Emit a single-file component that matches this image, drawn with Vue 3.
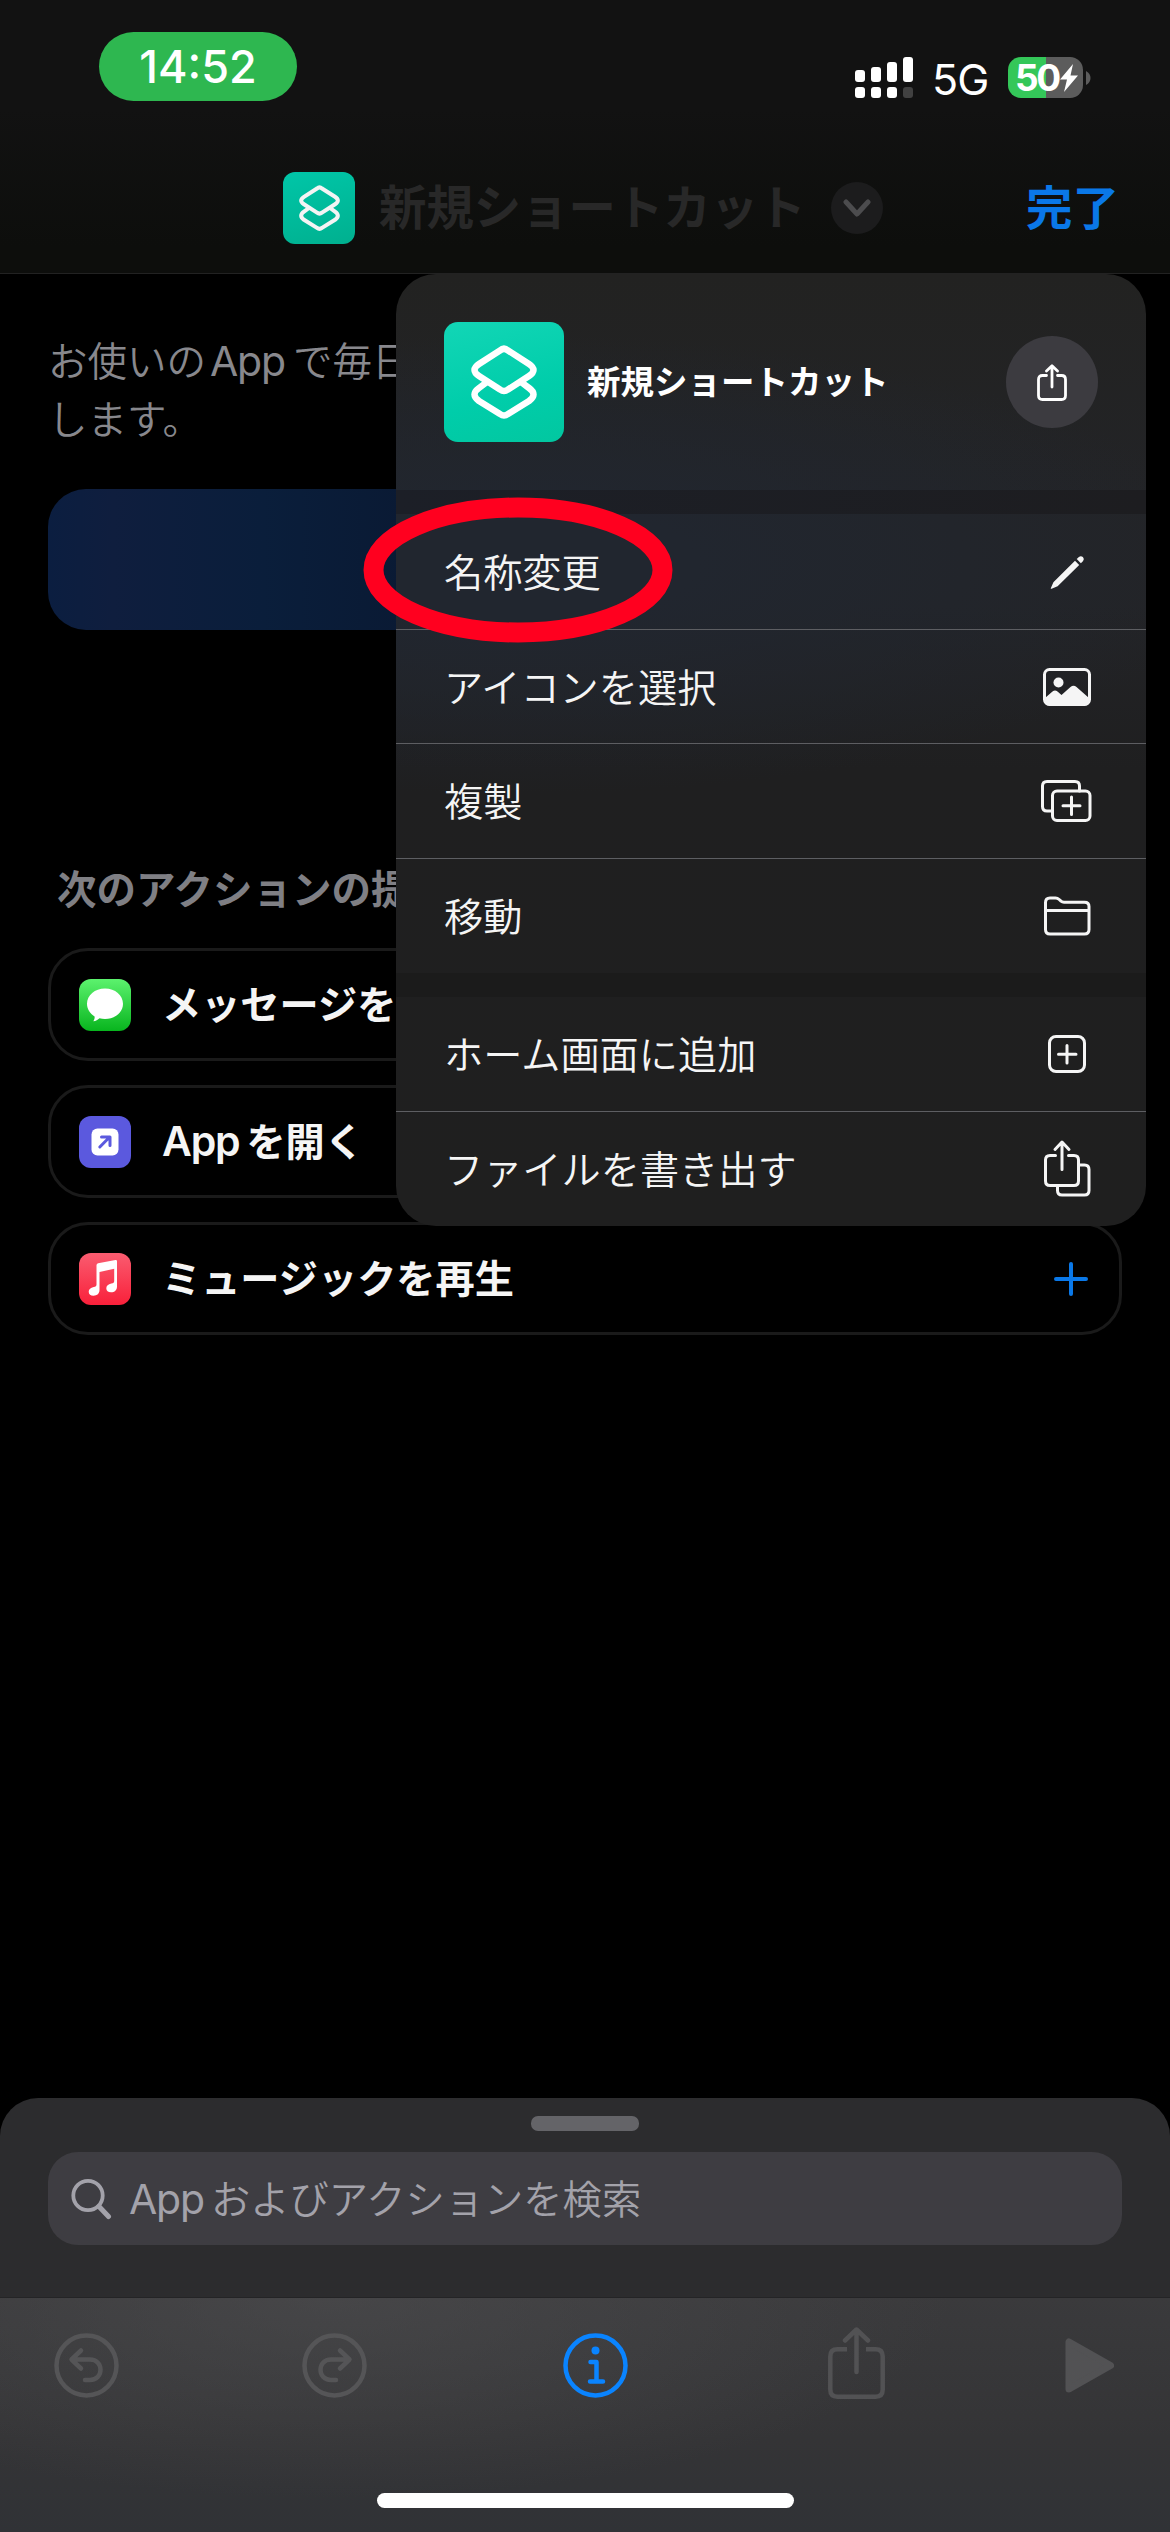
<script setup>
const fileActions = [
  { label: '名称変更', icon: 'pencil' },
  { label: 'アイコンを選択', icon: 'photo' },
  { label: '複製', icon: 'duplicate' },
  { label: '移動', icon: 'folder' },
]
const shareActions = [
  { label: 'ホーム画面に追加', icon: 'plus' },
  { label: 'ファイルを書き出す', icon: 'export' },
]
const groups = [fileActions, shareActions]
const suggestions = [
  { latin: '', label: 'メッセージを送信', icon: 'message' },
  { latin: 'App', label: 'を開く', icon: 'open' },
  { latin: '', label: 'ミュージックを再生', icon: 'music' },
]
</script>

<template>
  <div class="screen">
    <header class="header">
      <div class="status">
        <div class="clock">14:52</div>
        <div class="indicators">
          <svg class="signal" width="58" height="41" viewBox="0 0 58 41">
            <g fill="#fff">
              <rect x="0" y="13" width="10" height="12" rx="3" />
              <rect x="16" y="10" width="10" height="15" rx="3" />
              <rect x="32" y="5" width="10" height="20" rx="3" />
              <rect x="48" y="0" width="10" height="25" rx="3" />
              <rect x="0" y="30" width="10" height="11" rx="3" />
              <rect x="16" y="30" width="10" height="11" rx="3" />
              <rect x="32" y="30" width="10" height="11" rx="3" />
            </g>
            <rect x="48" y="30" width="10" height="11" rx="3" fill="#414141" />
          </svg>
          <span class="network">5G</span>
          <div class="battery">
            <span class="level">50</span>
            <svg width="19" height="28" viewBox="0 0 19 28"><path d="M14 0 1 15.500h7L5 28 19 11.500h-7.500z" fill="#fff" /></svg>
          </div>
          <svg class="battery-tip" width="5" height="14" viewBox="0 0 5 14"><path d="M0 0q4.500 2.500 4.500 7T0 14z" fill="#5c5c5c" /></svg>
        </div>
      </div>
      <div class="nav">
        <div class="app-tile small">
          <svg width="41" height="46" viewBox="0 0 66 74"><g fill="none" stroke="#f4f4f4" stroke-width="6.500" stroke-linejoin="round"><path d="M29 5.500Q33 2 37 5.500L58 19Q67 25 58 31L37 44.500Q33 47.500 29 44.500L8 31Q-1 25 8 19Z" /><path d="M16 37 8 43Q-1 49.500 8 56L29 69Q33 72 37 69L58 56Q67 49.500 58 43L50 37" /></g></svg>
        </div>
        <span class="nav-title">新規ショートカット</span>
        <div class="chevron">
          <svg width="28" height="18" viewBox="0 0 28 18"><path d="M3 3 14 15 25 3" fill="none" stroke="#4c4c4e" stroke-width="5" stroke-linecap="round" stroke-linejoin="round" /></svg>
        </div>
        <span class="done">完了</span>
      </div>
    </header>

    <main class="content">
      <p class="intro">お使いの<span class="latin">App</span>で毎日<br />します。</p>
      <div class="banner"></div>
      <h2 class="section">次のアクションの提案</h2>
      <div class="suggestions">
        <div v-for="s in suggestions" :key="s.label" class="suggestion">
          <svg v-if="s.icon === 'message'" width="52" height="52" viewBox="0 0 52 52">
            <defs><linearGradient id="g-msg" x2="0" y2="1"><stop stop-color="#5cf26e" /><stop offset="1" stop-color="#08b51e" /></linearGradient></defs>
            <rect width="52" height="52" rx="12" fill="url(#g-msg)" />
            <path d="M26 9.500c10.200 0 18 6.800 18 15.300S36.200 40 26 40c-2 0-3.800-.2-5.500-.7-1.500 1.600-3.700 2.700-6.200 3 1.100-1.400 1.500-3 1.300-4.900C11 34.700 8 30 8 24.800 8 16.300 15.800 9.500 26 9.500z" fill="#fff" />
          </svg>
          <svg v-else-if="s.icon === 'open'" width="52" height="52" viewBox="0 0 52 52">
            <rect width="52" height="52" rx="12" fill="#5b59de" />
            <rect x="12.500" y="12.500" width="27" height="27" rx="6" fill="#fff" />
            <path d="M20.800 31 30.200 21.500M22.500 21H31V29.500" fill="none" stroke="#5b59de" stroke-width="3" stroke-linecap="round" stroke-linejoin="round" />
          </svg>
          <svg v-else width="52" height="52" viewBox="0 0 52 52">
            <defs><linearGradient id="g-mus" x2="0" y2="1"><stop stop-color="#fa5c70" /><stop offset="1" stop-color="#f9203a" /></linearGradient></defs>
            <rect width="52" height="52" rx="12" fill="url(#g-mus)" />
            <path d="M17.500 12.300q0-1.600 1.600-2L36.500 7q1.500-.2 1.500 1.300V33.500c0 3.500-2.300 5.800-6 5.800-2.900 0-4.700-1.600-4.700-4 0-2.700 1.900-4.300 5-4.900 2.100-.4 2.900-.9 2.900-2.500V15.800L20.500 19V37c0 3.500-2.300 5.700-6 5.700-2.900 0-4.800-1.600-4.800-4 0-2.600 1.900-4.200 5-4.800 2-.4 2.800-.9 2.800-2.500z" fill="#fff" />
          </svg>
          <span class="suggestion-label"><span v-if="s.latin" class="latin">{{ s.latin }}</span>{{ s.label }}</span>
          <svg class="add" width="34" height="34" viewBox="0 0 34 34"><path d="M17 2V32M2 17H32" stroke="#0a78e8" stroke-width="4" stroke-linecap="round" /></svg>
        </div>
      </div>
    </main>

    <section class="sheet">
      <div class="grabber"></div>
      <div class="search">
        <svg width="42" height="42" viewBox="0 0 42 42"><g fill="none" stroke="#a3a2aa" stroke-linecap="round"><circle cx="17" cy="17.500" r="14.700" stroke-width="3.800" /><path d="M28 28.500 37.500 38.500" stroke-width="5" /></g></svg>
        <span class="placeholder"><span class="latin">App</span>およびアクションを検索</span>
      </div>
    </section>

    <footer class="toolbar">
      <div class="tools">
        <svg width="65" height="65" viewBox="0 0 65 65"><g fill="none" stroke="#555557" stroke-width="4.500" stroke-linecap="round" stroke-linejoin="round"><circle cx="32.500" cy="32.500" r="30" /><path d="M27 17.500 17.500 26.500 27 35.500M18.500 26.500H36C50 26.500 50 47 36 47H31" /></g></svg>
        <svg class="tool-redo" width="65" height="65" viewBox="0 0 65 65"><g fill="none" stroke="#555557" stroke-width="4.500" stroke-linecap="round" stroke-linejoin="round"><circle cx="32.500" cy="32.500" r="30" /><path d="M38 17.500 47.500 26.500 38 35.500M46.500 26.500H29C15 26.500 15 47 29 47H34" /></g></svg>
        <svg class="tool-info" width="65" height="65" viewBox="0 0 65 65"><g fill="none" stroke="#0a84ff" stroke-width="4.500" stroke-linecap="round" stroke-linejoin="round"><circle cx="32.500" cy="32.500" r="30" /><path d="M27.500 29H33.500V48.500M27 48.500H40" /></g><circle cx="32.500" cy="17.500" r="4" fill="#0a84ff" /></svg>
        <svg class="tool-share" width="57" height="72" viewBox="0 0 57 72"><g fill="none" stroke="#525254" stroke-width="4.500" stroke-linecap="round" stroke-linejoin="round"><path d="M19 22.300H9.500Q2.300 22.300 2.300 29.500V62.500Q2.300 69.700 9.500 69.700H47.500Q54.700 69.700 54.700 62.500V29.500Q54.700 22.300 47.500 22.300H38" stroke-linecap="butt" /><path d="M28.500 3V45M17 13.500 28.500 2.500 40 13.500" /></g></svg>
        <svg class="tool-play" width="49" height="55" viewBox="0 0 49 55"><path d="M4 4V51L45.500 27.500z" fill="#525254" stroke="#525254" stroke-width="7" stroke-linejoin="round" /></svg>
      </div>
      <div class="home"></div>
    </footer>

    <div class="menu">
      <div class="menu-head">
        <div class="app-tile">
          <svg width="66" height="74" viewBox="0 0 66 74"><g fill="none" stroke="#fff" stroke-width="6.500" stroke-linejoin="round"><path d="M29 5.500Q33 2 37 5.500L58 19Q67 25 58 31L37 44.500Q33 47.500 29 44.500L8 31Q-1 25 8 19Z" /><path d="M16 37 8 43Q-1 49.500 8 56L29 69Q33 72 37 69L58 56Q67 49.500 58 43L50 37" /></g></svg>
        </div>
        <span class="menu-title">新規ショートカット</span>
        <div class="share">
          <svg width="30" height="37" viewBox="0 0 30 37"><g fill="none" stroke="#fff" stroke-width="2.800" stroke-linecap="round" stroke-linejoin="round"><path d="M9.500 11.500H5.500Q1.500 11.500 1.500 15.500V31.500Q1.500 35.500 5.500 35.500H24.500Q28.500 35.500 28.500 31.500V15.500Q28.500 11.500 24.500 11.500H20.500" /><path d="M15 2V23M9.500 7 15 1.800 20.500 7" /></g></svg>
        </div>
      </div>
      <div v-for="(group, g) in groups" :key="g" class="group">
        <div v-for="item in group" :key="item.label" class="item">
          <span class="item-label">{{ item.label }}</span>
          <svg width="60" height="60" viewBox="0 0 60 60">
            <g v-if="item.icon === 'pencil'" fill="#f5f5f5">
              <path d="M14.600 46.700Q13.300 47.200 13.900 45.900L16.400 40.300 38 18.800 42.200 23 20.600 44.300z" />
              <path d="M39.700 17 41.900 14.900Q44 13.300 45.900 15.100 47.700 17 46.100 19.100L43.900 21.200z" />
            </g>
            <g v-else-if="item.icon === 'photo'">
              <rect x="7.500" y="12.500" width="45" height="35" rx="5" fill="none" stroke="#f5f5f5" stroke-width="3" />
              <circle cx="21.500" cy="25.500" r="5" fill="#f5f5f5" />
              <path d="M8 41 15.500 34.500Q18 32.500 20.500 34.500L24.500 38 33.500 30Q36.500 27.500 39.500 30L52 41V45Q52 48.500 48 48.500H12Q8 48.500 8 45z" fill="#f5f5f5" />
            </g>
            <g v-else-if="item.icon === 'duplicate'" fill="none" stroke="#f5f5f5" stroke-width="3" stroke-linecap="round">
              <rect x="15.500" y="20" width="37.500" height="29.500" rx="4.500" />
              <path d="M15.500 40H10Q5.500 40 5.500 35.500V15Q5.500 10.500 10 10.500H38Q42.500 10.500 42.500 15V20" />
              <path d="M34.500 26V43.500M26 34.700H43" />
            </g>
            <g v-else-if="item.icon === 'folder'" fill="none" stroke="#f5f5f5" stroke-width="3" stroke-linejoin="round">
              <path d="M8.500 16.500Q8.500 12 13 12H18.500Q20.500 12 22.200 13.500L24 15.200Q25.200 16.200 27 16.200H47.500Q52 16.200 52 20.500V43.500Q52 48 47.500 48H13Q8.500 48 8.500 43.500z" />
              <path d="M8.500 24.500H52" />
            </g>
            <g v-else-if="item.icon === 'plus'" fill="none" stroke="#f5f5f5" stroke-width="3" stroke-linecap="round">
              <rect x="12.500" y="12.500" width="35" height="35" rx="6.500" />
              <path d="M30 21.500V39M21.500 30.200H39" />
            </g>
            <g v-else fill="none" stroke="#f5f5f5" stroke-width="3" stroke-linecap="round" stroke-linejoin="round">
              <path d="M18.500 16.500H13Q8.500 16.500 8.500 21V42Q8.500 46.500 13 46.500H37Q41.500 46.500 41.500 42V21Q41.500 16.500 37 16.500H31.500" />
              <path d="M25 3.500V30.500M18 10.500 25 3 32 10.500" />
              <path d="M41.500 26H47.500Q52 26 52 30.500V51.500Q52 56 47.500 56H25Q20.500 56 20.500 51.500V46.500" />
            </g>
          </svg>
        </div>
      </div>
    </div>

    <svg class="highlight" width="310" height="146" viewBox="0 0 310 146"><ellipse cx="155" cy="73" rx="144.500" ry="62.500" fill="none" stroke="#ff001f" stroke-width="20" /></svg>
  </div>
</template>

<style>
body {
  background: #000;
}
</style>

<style scoped>
.screen {
  position: relative;
  width: 1170px;
  height: 2532px;
  display: flex;
  flex-direction: column;
  overflow: hidden;
  background: #000;
  color: #f5f5f5;
  font-family: "Noto Sans CJK JP", sans-serif;
}
.header {
  box-sizing: border-box;
  height: 274px;
  border-bottom: 1px solid #222;
  background: linear-gradient(#121212 0, #121212 40%, #0d0e0c 90%);
}
.status {
  height: 142px;
  display: flex;
  align-items: flex-start;
  justify-content: space-between;
  padding: 32px 79px 0 99px;
  box-sizing: border-box;
}
.clock {
  width: 198px;
  height: 69px;
  border-radius: 35px;
  background: #2eb750;
  color: #fff;
  font: 500 45px/70px Inter, sans-serif;
  text-align: center;
}
.indicators {
  display: flex;
  align-items: center;
  margin-top: 25px;
  height: 41px;
}
.network {
  width: 56px;
  margin-left: 19px;
  padding-top: 2px;
  color: #fff;
  font: 400 43px/44px Inter, sans-serif;
  letter-spacing: -1px;
  white-space: nowrap;
}
.battery {
  width: 75px;
  height: 41px;
  box-sizing: border-box;
  padding-left: 7px;
  border-radius: 13px;
  margin-left: 20px;
  background: linear-gradient(90deg, #34c759 38px, #5c5c5c 38px);
  display: flex;
  align-items: center;
}
.level {
  width: 44px;
  color: #fff;
  font: 700 37px/41px Inter, sans-serif;
  letter-spacing: -2.500px;
}
.battery-tip {
  margin-left: 3px;
}
.nav {
  height: 132px;
  display: flex;
  align-items: center;
  padding-left: 283px;
}
.app-tile {
  width: 120px;
  height: 120px;
  border-radius: 14px;
  flex: none;
  display: flex;
  align-items: center;
  justify-content: center;
  background: linear-gradient(165deg, #12d6b6, #00cdaa 60%, #02c7a0);
}
.app-tile.small {
  width: 72px;
  height: 72px;
  border-radius: 12px;
  background: linear-gradient(165deg, #00c6a8, #00b08f);
}
.nav-title {
  margin-left: 24px;
  width: 452px;
  padding-bottom: 6px;
  color: #282828;
  font-size: 47.400px;
  line-height: 60px;
  font-weight: 700;
  white-space: nowrap;
}
.chevron {
  width: 52px;
  height: 52px;
  border-radius: 50%;
  background: #1c1c1d;
  display: flex;
  align-items: center;
  justify-content: center;
}
.done {
  margin-left: 143px;
  padding-bottom: 6px;
  color: #0a78e8;
  font-size: 46.500px;
  line-height: 60px;
  font-weight: 600;
}
.content {
  height: 1824px;
  padding: 0 48px;
  box-sizing: border-box;
}
.latin {
  font-family: Inter, sans-serif;
  font-size: 41px;
  line-height: 1;
  letter-spacing: -1.200px;
}
.intro {
  margin: 0;
  padding: 56px 0 0;
  height: 215px;
  box-sizing: border-box;
  font-size: 39.500px;
  line-height: 58px;
  font-weight: 350;
  color: #88888d;
}
.intro .latin {
  margin: 0 8px 0 4px;
  font-weight: 400;
}
.banner {
  height: 141px;
  border-radius: 38px;
  background: linear-gradient(90deg, #0b1e40, #0f1e3e 6%, #0a1e3b 20%, #0a1a34 33%);
}
.section {
  margin: 227px 0 31px 9px;
  font-size: 39.500px;
  line-height: 60px;
  font-weight: 600;
  color: #7f7f84;
}
.suggestions {
  display: flex;
  flex-direction: column;
  gap: 24px;
}
.suggestion {
  height: 113px;
  box-sizing: border-box;
  border: 3px solid #1a1a1a;
  border-radius: 40px;
  display: flex;
  align-items: center;
  padding: 0 31px 0 28px;
}
.suggestion-label {
  margin-left: 31px;
  padding-bottom: 5px;
  font-size: 39.200px;
  line-height: 60px;
  font-weight: 600;
}
.suggestion-label .latin {
  margin-right: 7px;
}
.add {
  margin-left: auto;
}
.sheet {
  height: 199px;
  box-sizing: border-box;
  padding: 18px 48px 0;
  border-radius: 38px 38px 0 0;
  background: #2c2c2e;
}
.grabber {
  width: 108px;
  height: 15px;
  margin: 0 auto 21px;
  border-radius: 7px;
  background: #646468;
}
.search {
  height: 93px;
  border-radius: 30px;
  background: #3e3d42;
  display: flex;
  align-items: center;
  padding-left: 23px;
}
.placeholder {
  margin-left: 16px;
  padding-bottom: 4px;
  color: #a3a2aa;
  font-size: 39.300px;
  font-weight: 350;
  line-height: 60px;
}
.placeholder .latin {
  margin-right: 7px;
  font-weight: 400;
}
.toolbar {
  height: 235px;
  box-sizing: border-box;
  border-top: 1px solid #242426;
  background:
    radial-gradient(ellipse 620px 200px at 330px 0, rgba(78, 78, 80, 0.6), transparent),
    linear-gradient(#3a3a3c, #343436 60%, #303236);
}
.tools {
  display: flex;
  align-items: center;
  height: 134px;
  padding-left: 54px;
}
.tool-redo {
  margin-left: 183px;
}
.tool-info {
  margin-left: 196px;
}
.tool-share {
  margin: -5px 0 0 200px;
}
.tool-play {
  margin-left: 180px;
}
.home {
  width: 417px;
  height: 15px;
  margin: 61px auto 0;
  border-radius: 8px;
  background: #fff;
}
.menu {
  position: absolute;
  left: 396px;
  top: 274px;
  width: 750px;
  height: 952px;
  border-radius: 40px;
  overflow: hidden;
  display: flex;
  flex-direction: column;
  justify-content: space-between;
  background:
    linear-gradient(#1b1b1b, #1b1b1b) 0 699px / 100% 24px no-repeat,
    linear-gradient(90deg, #1c1f27, #1d1d20) 0 216px / 100% 24px no-repeat,
    radial-gradient(ellipse 720px 230px at 120px 290px, #21262f 25%, rgba(33, 38, 47, 0)),
    linear-gradient(#222221, #232427 25%, #232427 35%, #1f1f20 52%, #1f1f1f);
}
.menu-head {
  height: 216px;
  box-sizing: border-box;
  display: flex;
  align-items: center;
  padding: 0 48px;
}
.menu-title {
  flex: 1;
  margin-left: 23px;
  padding-bottom: 5px;
  color: #fff;
  font-size: 33.500px;
  line-height: 50px;
  font-weight: 700;
}
.share {
  width: 92px;
  height: 92px;
  border-radius: 50%;
  background: #3c3b40;
  display: flex;
  align-items: center;
  justify-content: center;
}
.group {
  display: flex;
  flex-direction: column;
}
.item {
  height: 114.600px;
  box-sizing: border-box;
  display: flex;
  align-items: center;
  justify-content: space-between;
  padding: 0 49px 0 48px;
  font-size: 39.200px;
  line-height: 60px;
  font-weight: 350;
}
.item-label {
  padding-bottom: 4px;
}
.item + .item {
  border-top: 1px solid #5d5e62;
}
.highlight {
  position: absolute;
  left: 362.500px;
  top: 496.500px;
}
</style>
